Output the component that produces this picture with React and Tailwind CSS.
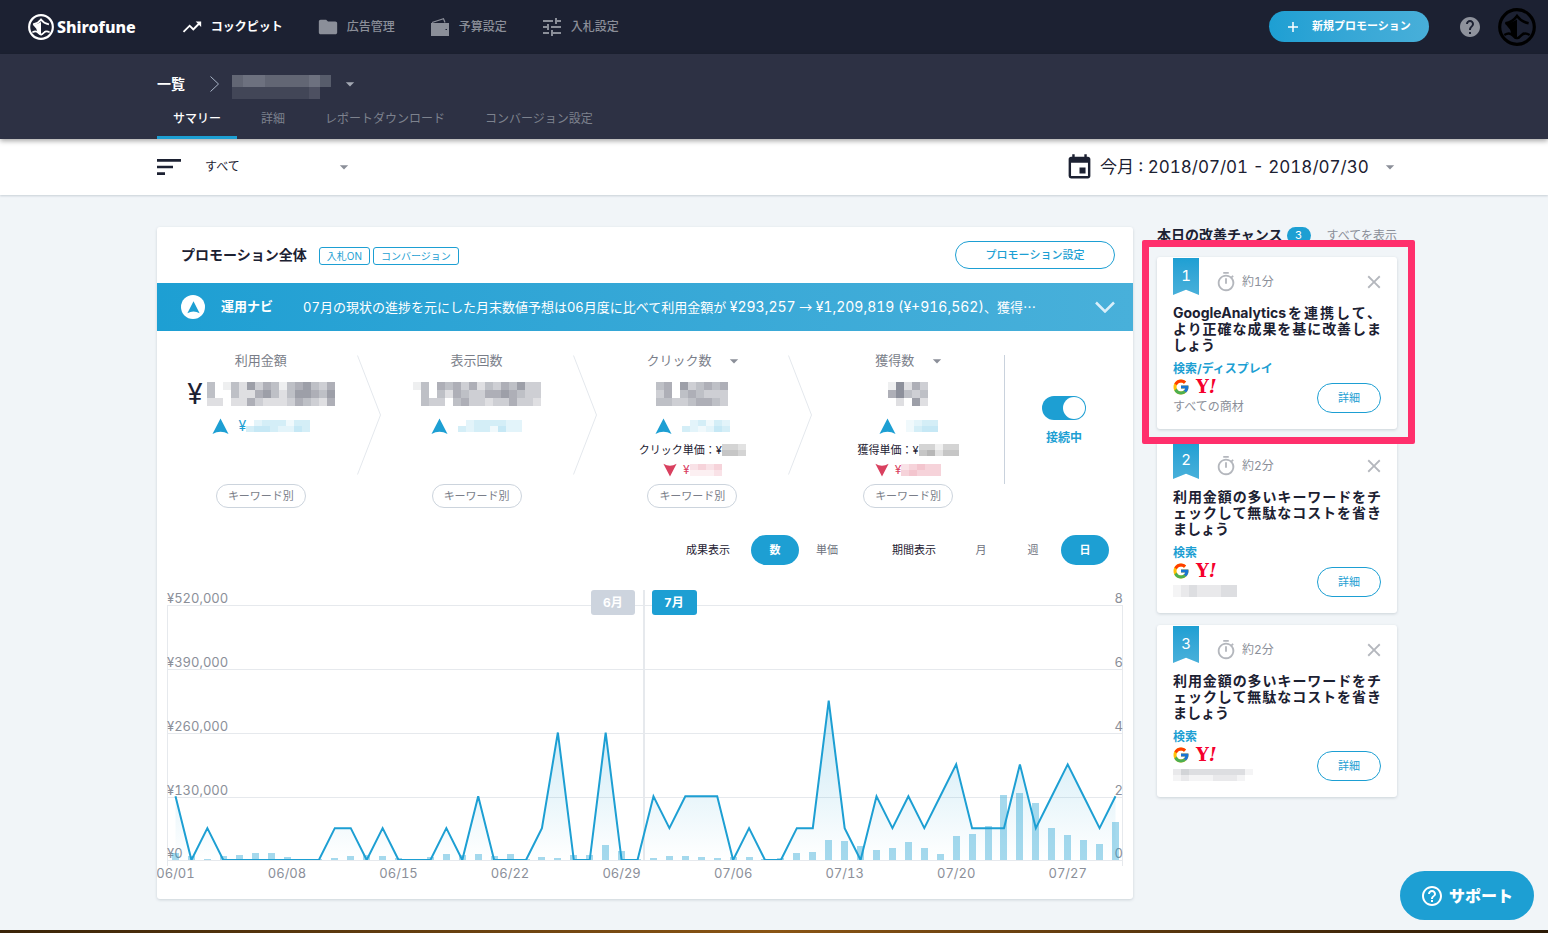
import React, { useState } from "react";
import {
  MdArrowDropDown,
  MdClose,
  MdEvent,
  MdFolder,
  MdHelp,
  MdHelpOutline,
  MdOutlineTimer,
  MdSort,
  MdTrendingUp,
  MdTune,
} from "react-icons/md";
import { FcGoogle } from "react-icons/fc";

const FONT = "font-[Inter,'Noto_Sans_CJK_JP',sans-serif]";

/* ---------------- DATA ---------------- */
// one entry per day, 06/01 - 07/30
const CONVERSIONS = [
  2, 0, 1, 0, 0, 0, 0, 0, 0, 0, 1, 1, 0, 1, 0, 0, 0, 1, 0, 2, 0, 0, 0, 1, 4, 0,
  0, 4, 0, 0, 2, 1, 2, 2, 2, 0, 1, 0, 0, 1, 1, 5, 1, 0, 2, 1, 2, 1, 2, 3, 1, 1,
  1, 3, 1, 2, 3, 2, 1, 2,
];

// thousands of yen
const COSTS = [
  14, 8, 2, 8, 10, 14, 14, 6, 0, 2, 4, 8, 10, 8, 4, 2, 6, 12, 10, 12, 8, 12, 2,
  6, 4, 10, 10, 30, 18, 2, 4, 8, 8, 6, 4, 6, 6, 2, 4, 14, 16, 41, 39, 29, 20,
  25, 37, 25, 12, 49, 53, 69, 133, 137, 116, 65, 51, 41, 33, 78,
];

const DATE_LABELS = [
  "06/01", "06/08", "06/15", "06/22", "06/29", "07/06", "07/13", "07/20", "07/27",
];

const CHANCES = [
  {
    id: 1,
    time: "約1分",
    title: "GoogleAnalyticsを連携して、より正確な成果を基に改善しましょう",
    category: "検索/ディスプレイ",
    product: "すべての商材",
    highlighted: true,
  },
  {
    id: 2,
    time: "約2分",
    title: "利用金額の多いキーワードをチェックして無駄なコストを省きましょう",
    category: "検索",
    masked: ["1232223300", "1232223300"],
  },
  {
    id: 3,
    time: "約2分",
    title: "利用金額の多いキーワードをチェックして無駄なコストを省きましょう",
    category: "検索",
    masked: ["2433333331", "1211122210"],
  },
];

/* ---------------- SMALL PARTS ---------------- */
// Masked value: every digit is the strength of one block
const Mosaic = ({ rows, color, cell = 8, rowHeight = 8, className = "" }) => {
  const width = rows[0].length * cell;
  const height = rows.length * rowHeight;

  return (
    <svg
      width={width}
      height={height}
      fill={color}
      shapeRendering="crispEdges"
      className={`shrink-0 ${className}`}
      aria-hidden="true"
    >
      {rows.map((row, y) =>
        row.split("").map((level, x) => (
          <rect
            key={`${x}-${y}`}
            x={x * cell}
            y={y * rowHeight}
            width={cell}
            height={rowHeight}
            fillOpacity={Number(level) / 13}
          />
        ))
      )}
    </svg>
  );
};

const ShipLogo = ({ className }) => (
  <svg viewBox="0 0 36 36" fill="none" stroke="currentColor" className={className}>
    <circle cx="18" cy="18" r="16.4" strokeWidth="3" />
    <path d="M7 14.500Q14 13 18 7.500Q22 13 29 14.500" strokeWidth="2.400" />
    <path
      d="M6.500 14.500Q13 14.500 18 11V29.500L13 25.500L11.500 20.500Z"
      fill="currentColor"
      stroke="none"
    />
    <path d="M18 29L24.500 23.500" strokeWidth="1.600" />
    <path
      d="M6 25.500Q11 22.500 14 26Q18 31 22 26Q25 22.500 30 25.500"
      strokeWidth="2.200"
    />
  </svg>
);

const WalletIcon = ({ className }) => (
  <svg viewBox="0 0 18 18" className={className}>
    <path d="M1 4.500L12.500 0.800L14 4.500" fill="none" stroke="currentColor" strokeWidth="1.200" />
    <path
      d="M0 5H18V18H0ZM14.500 11V12H16V11Z"
      fill="currentColor"
      fillRule="evenodd"
    />
  </svg>
);

const Arrow = ({ className }) => (
  <svg viewBox="0 0 18 18" fill="currentColor" className={className} aria-hidden="true">
    <path d="M9 0.500L17.500 17Q9 12 0.500 17Z" />
  </svg>
);

const Chevron = () => (
  <svg
    viewBox="0 0 24 120"
    fill="none"
    stroke="#e4e8ed"
    className="mt-1 h-[120px] w-6 shrink-0"
  >
    <path d="M0.500 0.500L23.500 60L0.500 119.500" />
  </svg>
);

const Dropdown = ({ label, value, className = "" }) => (
  <span className="relative inline-flex items-center">
    <select
      aria-label={label}
      className={`appearance-none bg-transparent outline-none ${className}`}
    >
      <option>{value}</option>
    </select>
    <MdArrowDropDown className="pointer-events-none absolute -right-1.5 size-5 text-[#8b8f99]" />
  </span>
);

/* ---------------- HEADER ---------------- */
const NAV_ITEMS = [
  { label: "コックピット", Icon: MdTrendingUp, size: "size-[22px]", active: true },
  { label: "広告管理", Icon: MdFolder, size: "size-[22px]" },
  { label: "予算設定", Icon: WalletIcon, size: "size-[18px]" },
  { label: "入札設定", Icon: MdTune, size: "size-6" },
];

const Header = () => (
  <header className="flex h-[54px] items-center bg-[#1c2132] pr-3 pb-px pl-7">
    <a href="#" className="flex items-center gap-[3px] text-white">
      <ShipLogo className="size-[26px]" />
      <span className="font-['Noto_Sans',sans-serif] text-base font-extrabold">Shirofune</span>
    </a>

    <nav className="ml-[47px] flex gap-9">
      {NAV_ITEMS.map(({ label, Icon, size, active }) => (
        <a
          key={label}
          href="#"
          className={`flex items-center gap-2.5 text-xs ${
            active ? "font-bold text-white" : "font-medium text-[#8b8f99]"
          }`}
        >
          <span className="flex w-[18px] justify-center">
            <Icon className={`shrink-0 ${size}`} />
          </span>
          {label}
        </a>
      ))}
    </nav>

    <button className="ml-auto flex h-[31px] w-40 items-center rounded-full bg-linear-to-r from-[#1d9fd3] to-[#48afd9] pl-[19px] text-[11px] font-bold text-white">
      <svg viewBox="0 0 10 10" stroke="currentColor" strokeWidth="1.5" className="mr-3.5 size-2.5">
        <path d="M5 0V10M0 5H10" />
      </svg>
      新規プロモーション
    </button>
    <button aria-label="ヘルプ" className="ml-[29px] text-[#8e929c]">
      <MdHelp className="size-6" />
    </button>
    <button aria-label="アカウント" className="ml-4 text-black">
      <ShipLogo className="size-[38px]" />
    </button>
  </header>
);

const SubHeader = () => (
  <div className="relative h-[85px] bg-[#2d3144] pr-[151px] pl-[157px] shadow-[0_2px_5px_rgba(0,0,0,0.35)]">
    <div className="flex h-[60px] items-center">
      <a href="#" className="text-sm font-bold text-white">一覧</a>
      <svg viewBox="0 0 10 16" fill="none" stroke="#a9b4c6" className="ml-[25px] h-4 w-2.5">
        <path d="M0.500 0.500L8.500 8L0.500 15.500" />
      </svg>
      <button aria-label="プロモーションを選択" className="ml-3 flex items-center text-[#a3a8b3]">
        <Mosaic
          rows={["000000000", "566555564", "566555564", "222222230", "222222230"]}
          color="#b8bcc4"
          cell={11}
          rowHeight={6}
        />
        <MdArrowDropDown className="ml-[9px] size-5" />
      </button>
    </div>

    <nav className="-mt-2 flex h-[33px] text-xs text-[#7d828e]">
      <a href="#" className="h-full border-b-[3px] border-[#1d9fd3] px-4 pt-[5px] font-medium text-white">
        サマリー
      </a>
      <a href="#" className="ml-6 pt-[5px]">詳細</a>
      <a href="#" className="ml-10 pt-[5px]">レポートダウンロード</a>
      <a href="#" className="ml-10 pt-[5px]">コンバージョン設定</a>
    </nav>
  </div>
);

const FilterBar = () => (
  <div className="flex h-14 items-center bg-white pr-[154px] pl-[157px] text-[#1c2132] shadow-[0_1px_2px_rgba(40,60,80,0.2)]">
    <MdSort className="-ml-1 size-8" />
    <span className="ml-5 flex">
      <Dropdown label="絞り込み" value="すべて" className="w-[143px] text-xs" />
    </span>
    <MdEvent className="ml-auto size-[29px]" />
    <span className="ml-1.5 flex">
      <Dropdown
        label="期間"
        value="今月 : 2018/07/01 - 2018/07/30"
        className="w-[294px] text-[17px] leading-7"
      />
    </span>
  </div>
);

/* ---------------- METRICS ---------------- */
const KeywordButton = () => (
  <button className="mt-1.5 h-6 w-[90px] rounded-full border border-[#ccd4dd] text-[11px] text-[#7a7e89]">
    キーワード別
  </button>
);

const Metric = ({ title, select, yen, amount, delta, deltaYen, price, priceMask, lossMask }) => (
  <div className="flex min-w-0 flex-1 flex-col items-center">
    <div className="flex h-5 items-center text-[13px] text-[#7a7e89]">
      {select ? <Dropdown label={title} value={title} className={select} /> : title}
    </div>
    <div className="mt-2.5 flex h-[26px] items-center gap-1 text-[28px] text-[#1c2132]">
      {yen && <span>¥</span>}
      <Mosaic rows={amount} color="#2b3044" />
    </div>
    <div className="mt-[7px] flex h-6 items-center text-sm text-[#1d9fd3]">
      <Arrow className="mr-2.5 size-[17px]" />
      {deltaYen && "¥"}
      <Mosaic rows={delta} color="#46b4dd" rowHeight={6} />
    </div>
    <div className="flex h-6 items-center text-[11px] text-[#1c2132]">
      {price}
      {priceMask && <Mosaic rows={priceMask} color="#444444" rowHeight={6} />}
    </div>
    <div className="flex h-4 items-center text-xs text-[#d9405f]">
      {lossMask && (
        <>
          <Arrow className="mr-1.5 size-3.5 rotate-180" />
          ¥
          <Mosaic rows={lossMask} color="#d9405f" rowHeight={6} />
        </>
      )}
    </div>
    <KeywordButton />
  </div>
);

const Metrics = () => (
  <div className="flex pt-5 pl-2">
    <Metric
      title="利用金額"
      yen
      amount={["4014263541456435", "4004225642466546", "2202253222354325"]}
      deltaYen
      delta={["02333133", "34432243"]}
    />
    <Chevron />
    <Metric
      title="表示回数"
      amount={["1405453524354633", "0404254335565433", "0433045332335332"]}
      delta={["02333322", "32331422"]}
    />
    <Chevron />
    <Metric
      title="クリック数"
      select="w-[92px]"
      amount={["450634545", "350454333", "443345543"]}
      delta={["023132", "321243"]}
      price="クリック単価：¥"
      priceMask={["332", "443"]}
      lossMask={["2323", "1112"]}
    />
    <Chevron />
    <Metric
      title="獲得数"
      select="w-[66px]"
      amount={["17253", "57434", "02062"]}
      delta={["1233", "1344"]}
      price="獲得単価：¥"
      priceMask={["33133", "45244"]}
      lossMask={["23433", "34333"]}
    />
    <div className="mt-1 flex h-[129px] w-[129px] flex-col items-center border-l border-[#c9d2dd] pt-[41px] pr-2.5">
      <input
        id="connected"
        type="checkbox"
        role="switch"
        defaultChecked
        className="flex h-6 w-11 appearance-none items-center rounded-full bg-[#c9d2dd] px-px before:block before:size-[22px] before:rounded-full before:bg-white checked:justify-end checked:bg-[#1d9fd3]"
      />
      <label htmlFor="connected" className="mt-2.5 text-xs font-bold text-[#1d9fd3]">
        接続中
      </label>
    </div>
  </div>
);

/* ---------------- CHART ---------------- */
const ToggleButton = ({ active, onClick, children }) => (
  <button
    onClick={onClick}
    aria-pressed={active}
    className={`h-[30px] w-12 rounded-full text-[11px] ${
      active ? "bg-[#1d9fd3] font-bold text-white" : "text-[#6d717d]"
    }`}
  >
    {children}
  </button>
);

const ChartControls = () => {
  const [result, setResult] = useState("数");
  const [period, setPeriod] = useState("日");

  return (
    <div className="mt-[27px] flex items-center justify-end pr-6 text-[11px] text-[#1c2132]">
      <span>成果表示</span>
      <div className="ml-[21px] flex gap-1">
        {["数", "単価"].map((item) => (
          <ToggleButton key={item} active={result === item} onClick={() => setResult(item)}>
            {item}
          </ToggleButton>
        ))}
      </div>
      <span className="ml-[41px]">期間表示</span>
      <div className="ml-[21px] flex gap-1">
        {["月", "週", "日"].map((item) => (
          <ToggleButton key={item} active={period === item} onClick={() => setPeriod(item)}>
            {item}
          </ToggleButton>
        ))}
      </div>
    </div>
  );
};

const BASE = 280;
const PLOT_HEIGHT = 255;
const dayX = (i) => 18.5 + (i * 940) / 59;
const conversionY = (value) => BASE - (value * PLOT_HEIGHT) / 8;

const Chart = () => {
  const points = CONVERSIONS.map((v, i) => `${dayX(i)},${conversionY(v)}`).join(" ");

  return (
    <svg viewBox="0 0 976 319" className="mt-[15px] block w-full" role="img" aria-label="日別の成果">
      <defs>
        <linearGradient id="area" x1="0" y1="120" x2="0" y2="280" gradientUnits="userSpaceOnUse">
          <stop offset="0" stopColor="#1d9fd3" stopOpacity="0.25" />
          <stop offset="1" stopColor="#1d9fd3" stopOpacity="0" />
        </linearGradient>
        <clipPath id="plot">
          <rect x="0" y="0" width="976" height="280" />
        </clipPath>
      </defs>

      <g stroke="#e6e9ed" shapeRendering="crispEdges">
        {[25, 89, 153, 217, 280].map((y) => (
          <line key={y} x1="10" x2="966" y1={y + 0.5} y2={y + 0.5} />
        ))}
        <line x1="10.5" x2="10.5" y1="25" y2="286" />
        <line x1="965.5" x2="965.5" y1="25" y2="286" />
        <line x1="487" x2="487" y1="10" y2="280" strokeWidth="2" />
      </g>

      <g fill="#8b8f99" fontSize="13">
        {["¥520,000", "¥390,000", "¥260,000", "¥130,000", "¥0"].map((label, i) => (
          <text key={label} x="10" y={23 + i * 64 - (i === 4 ? 1 : 0)}>{label}</text>
        ))}
        {[8, 6, 4, 2, 0].map((label, i) => (
          <text key={label} x="966" y={23 + i * 64 - (i === 4 ? 1 : 0)} textAnchor="end">
            {label}
          </text>
        ))}
        {DATE_LABELS.map((label, i) => (
          <text key={label} x={dayX(i * 7)} y="298" textAnchor="middle">{label}</text>
        ))}
      </g>

      <polygon points={`${dayX(0)},${BASE} ${points} ${dayX(59)},${BASE}`} fill="url(#area)" />
      <g fill="#1d9fd3" fillOpacity="0.4" shapeRendering="crispEdges">
        {COSTS.map((cost, i) => {
          const height = (cost * PLOT_HEIGHT) / 520;
          return <rect key={i} x={dayX(i) - 3.5} y={BASE - height} width="7" height={height} />;
        })}
      </g>
      <polyline
        points={points}
        fill="none"
        stroke="#1d9fd3"
        strokeWidth="2"
        clipPath="url(#plot)"
      />

      <g fontSize="12" fontWeight="700" textAnchor="middle">
        <rect x="434" y="10" width="44" height="25" rx="3" fill="#cdd4de" />
        <text x="456" y="27" fill="#ffffff">6月</text>
        <rect x="495" y="10" width="45" height="25" rx="3" fill="#1d9fd3" />
        <text x="517" y="27" fill="#ffffff">7月</text>
      </g>
    </svg>
  );
};

/* ---------------- PROMOTION CARD ---------------- */
const Figure = ({ children }) => <span className="text-sm">{children}</span>;

const PromotionCard = () => (
  <section className="min-w-0 flex-1 rounded-[3px] bg-white shadow-[0_1px_3px_rgba(40,60,80,0.18)]">
    <div className="flex h-14 items-center pr-[18px] pl-6">
      <h1 className="text-sm font-bold text-[#1c2132]">プロモーション全体</h1>
      <div className="ml-3 flex gap-[3px] pt-0.5 text-[10px] text-[#1d9fd3]">
        <span className="flex h-[18px] items-center rounded-[3px] border border-[#1d9fd3] px-[7px]">
          入札ON
        </span>
        <span className="flex h-[18px] items-center rounded-[3px] border border-[#1d9fd3] px-[7px]">
          コンバージョン
        </span>
      </div>
      <button className="ml-auto h-7 w-40 rounded-full border border-[#1d9fd3] text-[11px] font-medium text-[#1d9fd3]">
        プロモーション設定
      </button>
    </div>

    <div className="flex h-12 items-center bg-linear-to-r from-[#1d9fd3] to-[#48b0da] pr-[18px] pl-6 text-[13px] text-white">
      <span className="flex size-6 shrink-0 items-center justify-center rounded-full bg-white">
        <Arrow className="size-[13px] text-[#1d9fd3]" />
      </span>
      <span className="ml-4 shrink-0 font-bold">運用ナビ</span>
      <p className="ml-[30px] truncate">
        07月の現状の進捗を元にした月末数値予想は06月度に比べて利用金額が{" "}
        <Figure>¥293,257</Figure> <span className="font-['Noto_Sans_CJK_JP',sans-serif]">→</span>{" "}
        <Figure>¥1,209,819</Figure> <Figure>(¥+916,562)</Figure>、獲得
        <span className="font-['Noto_Sans_CJK_JP',sans-serif]">…</span>
      </p>
      <button aria-label="開く" className="ml-auto">
        <svg viewBox="0 0 20 12" fill="none" stroke="#d9effa" strokeWidth="2.5" className="h-3 w-5">
          <path d="M1 1.500L10 10.500L19 1.500" />
        </svg>
      </button>
    </div>

    <Metrics />
    <ChartControls />
    <Chart />
  </section>
);

/* ---------------- CHANCES ---------------- */
const ChanceCard = ({ chance }) => (
  <li className="relative h-[172px] rounded-[3px] bg-white px-4 shadow-[0_1px_3px_rgba(40,60,80,0.18)]">
    <div className="flex h-12 pt-px">
      <span className="flex h-[37px] w-[26px] justify-center bg-linear-to-b from-[#1d9fd3] to-[#48b0da] pt-2 text-[15px] leading-5 text-white [clip-path:polygon(0_0,100%_0,100%_100%,50%_86%,0_100%)]">
        {chance.id}
      </span>
      <span className="ml-4 flex h-12 items-center gap-[5px] text-xs text-[#8b8f99]">
        <MdOutlineTimer className="size-[22px] text-[#b4b7bd]" />
        {chance.time}
      </span>
      <button aria-label="閉じる" className="-mr-1 ml-auto h-12 text-[#b4b7bd]">
        <MdClose className="size-[22px]" />
      </button>
    </div>

    <h3 className="text-justify text-sm leading-4 font-bold text-[#1c2132]">{chance.title}</h3>

    <div className="mt-2 flex justify-between">
      <div>
        <p className="text-xs leading-4 font-bold text-[#1d9fd3]">{chance.category}</p>
        <div className="mt-0.5 flex h-4 items-center gap-1.5">
          <FcGoogle className="-ml-px size-[18px]" />
          <span className="font-['DejaVu_Serif',serif] text-lg leading-4 font-bold text-[#f5002d]">
            Y<span className="italic">!</span>
          </span>
        </div>
        {chance.product ? (
          <p className="mt-1 text-xs leading-4 text-[#8b8f99]">{chance.product}</p>
        ) : (
          <Mosaic rows={chance.masked} color="#6d717d" rowHeight={6} className="mt-1.5" />
        )}
      </div>
      <button className="mt-[22px] h-[30px] w-16 rounded-full border border-[#1d9fd3] text-[11px] text-[#1d9fd3]">
        詳細
      </button>
    </div>

    {chance.highlighted && (
      <div className="pointer-events-none absolute -top-[17px] -right-[18px] -bottom-[15px] -left-[15px] z-10 rounded-xs border-[7px] border-[#ff2f6c]" />
    )}
  </li>
);

const Chances = () => (
  <aside className="w-60 shrink-0">
    <div className="flex h-[30px] items-start">
      <h2 className="text-sm leading-4 font-bold whitespace-nowrap text-[#1c2132]">
        本日の改善チャンス
      </h2>
      <span className="ml-1 flex h-[17px] w-6 items-center justify-center rounded-full bg-[#1d9fd3] text-[11px] text-white">
        3
      </span>
      <a href="#" className="ml-auto text-xs leading-[18px] whitespace-nowrap text-[#8b8f99]">
        すべてを表示
      </a>
    </div>
    <ul className="flex flex-col gap-3">
      {CHANCES.map((chance) => (
        <ChanceCard key={chance.id} chance={chance} />
      ))}
    </ul>
  </aside>
);

const App = () => {
  return (
    <div className={`flex min-h-screen flex-col bg-[#f1f5f8] tabular-nums ${FONT}`}>
      <Header />
      <SubHeader />
      <FilterBar />

      <main className="flex items-start gap-6 pt-8 pr-[151px] pb-[31px] pl-[157px]">
        <PromotionCard />
        <Chances />
      </main>

      <div className="mt-auto h-[3px] bg-linear-to-r from-[#3a2408] via-[#8a5514] to-[#2c1a06]" />

      <button className="fixed right-[14px] bottom-[13px] flex h-[49px] w-[134px] items-center gap-[5px] rounded-full bg-[#1d9fd3] pl-5 text-base font-extrabold text-white">
        <MdHelpOutline className="size-6" />
        サポート
      </button>
    </div>
  );
};

export default App;
